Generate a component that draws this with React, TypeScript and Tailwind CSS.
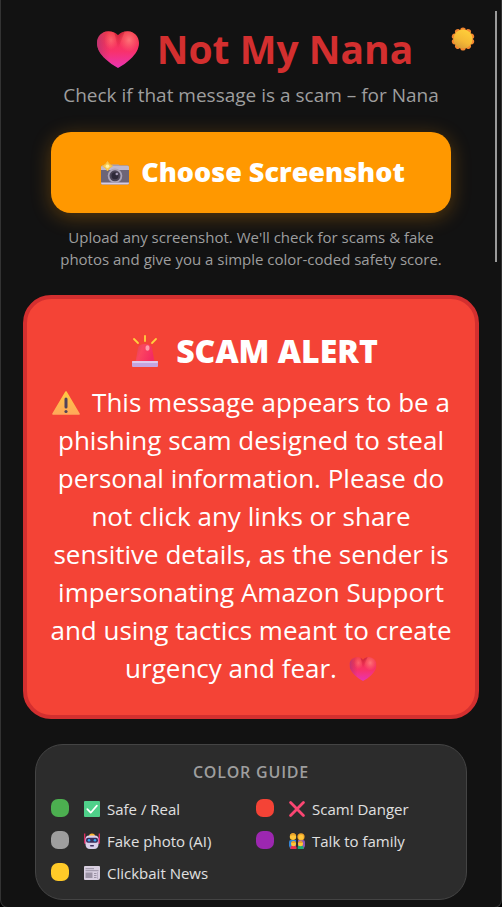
import { useId } from 'react'
import type { ReactNode } from 'react'

interface IconProps {
  className?: string
}

function HeartIcon({ className }: IconProps) {
  const id = useId()
  return (
    <svg viewBox="0 0 42 37" className={className} aria-hidden="true">
      <defs>
        <linearGradient id={`${id}-body`} x1="0" y1="0" x2="0" y2="1">
          <stop offset="0.1" stopColor="#f43a4c" />
          <stop offset="0.55" stopColor="#f8316b" />
          <stop offset="1" stopColor="#e934b4" />
        </linearGradient>
        <radialGradient id={`${id}-shine`} cx="0.5" cy="0.5" r="0.5">
          <stop offset="0" stopColor="#ff7a7c" stopOpacity="0.9" />
          <stop offset="1" stopColor="#ff6a70" stopOpacity="0" />
        </radialGradient>
        <linearGradient id={`${id}-edge`} x1="0" y1="0" x2="1" y2="0">
          <stop offset="0" stopColor="#a8327e" stopOpacity="0.7" />
          <stop offset="0.3" stopColor="#c02f62" stopOpacity="0" />
        </linearGradient>
        <linearGradient id={`${id}-fold`} x1="0" y1="0" x2="0" y2="1">
          <stop offset="0" stopColor="#b5122e" stopOpacity="0.7" />
          <stop offset="1" stopColor="#d81b45" stopOpacity="0" />
        </linearGradient>
        <clipPath id={`${id}-clip`}>
          <path d="M21 4.2C23.8 1.3 27.4 0 31 0.2C37.2 0.6 42 5.3 42 12C42 18 38.6 23.2 33.5 28C29.8 31.5 25.5 34.5 21 37C16.5 34.5 12.2 31.5 8.5 28C3.4 23.2 0 18 0 12C0 5.3 4.8 0.6 11 0.2C14.6 0 18.2 1.3 21 4.2Z" />
        </clipPath>
      </defs>
      <g clipPath={`url(#${id}-clip)`}>
        <rect width="42" height="37" fill={`url(#${id}-body)`} />
        <rect width="42" height="37" fill={`url(#${id}-edge)`} />
        <path d="M17 0H28L21 18Z" fill={`url(#${id}-fold)`} />
        <ellipse cx="32" cy="9" rx="10" ry="12" fill={`url(#${id}-shine)`} />
        <ellipse cx="14" cy="9" rx="7" ry="10" fill={`url(#${id}-shine)`} opacity="0.7" />
      </g>
    </svg>
  )
}

function SunIcon({ className }: IconProps) {
  const id = useId()
  const petals = [0, 36, 72, 108, 144, 180, 216, 252, 288, 324]
  return (
    <svg viewBox="0 0 24 24" className={className} aria-hidden="true">
      <defs>
        <linearGradient id={id} x1="0.8" y1="0" x2="0.3" y2="1">
          <stop offset="0" stopColor="#ffd13b" />
          <stop offset="0.6" stopColor="#f5b935" />
          <stop offset="1" stopColor="#d99b36" />
        </linearGradient>
      </defs>
      {petals.map((angle) => (
        <circle key={angle} cx="12" cy="3.2" r="2.8" fill="#f4862f" transform={`rotate(${angle} 12 12)`} />
      ))}
      <circle cx="12" cy="12" r="9.6" fill={`url(#${id})`} />
    </svg>
  )
}

function CameraIcon({ className }: IconProps) {
  return (
    <svg viewBox="0 0 28 24" className={className} aria-hidden="true">
      <path d="M9 5L10.5 3.5H17.5L19 5Z" fill="#a9a2b8" />
      <rect y="4.5" width="28" height="19" rx="1.5" fill="#6d6577" />
      <path d="M0 6A1.5 1.5 0 0 1 1.5 4.5H26.5A1.5 1.5 0 0 1 28 6V9H0Z" fill="#bfb8cd" />
      <path d="M0 21.5H28V22A1.5 1.5 0 0 1 26.5 23.5H1.5A1.5 1.5 0 0 1 0 22Z" fill="#d5cce5" />
      <circle cx="14" cy="14.8" r="7.3" fill="#aca5b8" />
      <circle cx="14" cy="14.8" r="5.5" fill="#4c4557" />
      <circle cx="14" cy="14.8" r="3.5" fill="#2e2939" />
      <circle cx="15.8" cy="13" r="1.3" fill="#a69bb6" />
      <path d="M6.5 0.5Q8 4 11.5 5Q8 6.5 6.5 10Q5 6.5 1.5 5Q5 4 6.5 0.5Z" fill="#f9ce55" stroke="#f3bc4a" />
      <circle cx="6.5" cy="5.2" r="1.8" fill="#fff0a9" />
    </svg>
  )
}

function SirenIcon({ className }: IconProps) {
  const id = useId()
  return (
    <svg viewBox="0 0 26 32" className={className} aria-hidden="true">
      <defs>
        <linearGradient id={id} x1="0" y1="0" x2="1" y2="0.4">
          <stop offset="0" stopColor="#d9484e" />
          <stop offset="0.4" stopColor="#fb4560" />
          <stop offset="1" stopColor="#f42b62" />
        </linearGradient>
      </defs>
      <g stroke="#ffd23f" strokeWidth="1.8" strokeLinecap="round">
        <path d="M13 1V6" />
        <path d="M2 4L6 8" />
        <path d="M24 4L20 8" />
      </g>
      <path d="M6 13Q7 9 13 9T20 13L22.5 27H3.5Z" fill={`url(#${id})`} />
      <ellipse cx="15.5" cy="13" rx="2" ry="2.8" fill="#ff9caa" />
      <rect y="26" width="26" height="6" rx="1" fill="#c4a5e0" />
      <rect y="26" width="26" height="2" rx="1" fill="#ddc9ee" />
    </svg>
  )
}

function WarningIcon({ className }: IconProps) {
  const id = useId()
  return (
    <svg viewBox="0 0 28 24" className={className} aria-hidden="true">
      <defs>
        <linearGradient id={id} x1="0" y1="0" x2="0" y2="1">
          <stop offset="0" stopColor="#ffc842" />
          <stop offset="1" stopColor="#ffa95a" />
        </linearGradient>
      </defs>
      <path d="M14 1L27 23H1Z" fill={`url(#${id})`} stroke={`url(#${id})`} strokeWidth="1.6" strokeLinejoin="round" />
      <rect x="12.5" y="6.5" width="3" height="11" rx="1.5" fill="#52435a" />
      <circle cx="14" cy="20.5" r="1.6" fill="#52435a" />
    </svg>
  )
}

function CheckIcon() {
  return (
    <svg viewBox="0 0 16 16" className="size-4 shrink-0" aria-hidden="true">
      <rect width="16" height="16" rx="1" fill="#4fd08a" />
      <path d="M3.3 8.2L6.7 11.7L12.9 4.6" fill="none" stroke="#fff" strokeWidth="1.7" strokeLinecap="round" strokeLinejoin="round" />
    </svg>
  )
}

function CrossIcon() {
  return (
    <svg viewBox="0 0 16 16" className="size-4 shrink-0" aria-hidden="true">
      <path d="M1.6 1.6L14.4 14.4M14.4 1.6L1.6 14.4" stroke="#fb4672" strokeWidth="2.8" strokeLinecap="round" />
    </svg>
  )
}

function RobotIcon() {
  return (
    <svg viewBox="0 0 16 16" className="size-4 shrink-0" aria-hidden="true">
      <path d="M0.7 0.5V10M15.3 0.5V10" stroke="#e22c60" strokeWidth="1.3" />
      <path d="M0 5H2.5V11H1Q0 11 0 9ZM16 5H13.5V11H15Q16 11 16 9Z" fill="#cf2961" />
      <path d="M5 3Q5 0.5 8 0.5T11 3Z" fill="#ffb52e" />
      <path d="M1.5 6Q1.5 2.5 5 2.5H11Q14.5 2.5 14.5 6V11Q14.5 16 10 16H6Q1.5 16 1.5 11Z" fill="#d9cfea" />
      <rect x="2" y="4.8" width="12" height="5" rx="2" fill="#382d5c" />
      <circle cx="5" cy="7.2" r="1.3" fill="#35a8f2" />
      <circle cx="11" cy="7.2" r="1.3" fill="#35a8f2" />
      <rect x="6" y="12" width="4" height="1.4" rx="0.7" fill="#40305f" />
    </svg>
  )
}

function FamilyIcon() {
  return (
    <svg viewBox="0 0 16 16" className="size-4 shrink-0" aria-hidden="true">
      <path d="M0 13V9Q0 7 2 7H7V16H1.5Z" fill="#3483d4" />
      <path d="M16 13V9Q16 7 14 7H9V16H14.5Z" fill="#8f54b5" />
      <circle cx="4" cy="3.8" r="3.2" fill="#ffc639" />
      <path d="M1 3Q1.5 0 4 0T7 3Q4 1.5 1 3Z" fill="#e8a02a" />
      <circle cx="12" cy="3.8" r="3.6" fill="#f0a42a" />
      <circle cx="12" cy="4.3" r="2.5" fill="#ffc639" />
      <path d="M1.5 16V14Q1.5 12.5 4.2 12.5T7.5 14V16Z" fill="#e8304f" />
      <path d="M8.7 16V14Q8.7 12.5 11.6 12.5T14.5 14V16Z" fill="#1cab72" />
      <circle cx="4.5" cy="10.8" r="2.5" fill="#ffc639" />
      <circle cx="11.5" cy="10.8" r="2.5" fill="#ffc639" />
      <path d="M2 10Q2.5 8 4.5 8T7 10ZM9 10Q9.5 8 11.5 8T14 10Z" fill="#e8a02a" />
    </svg>
  )
}

function NewsIcon() {
  return (
    <svg viewBox="0 0 16 16" className="size-4 shrink-0" aria-hidden="true">
      <path d="M0 2Q0 1 1 1H15Q16 1 16 2V13Q16 15 14 15H1Q0 15 0 14Z" fill="#d8cfe0" />
      <path d="M1.5 3.7H10M1.5 5.7H14.5M10 8.5H12.5M10 10.5H12.5M10 12.5H12.5" stroke="#9b93a5" />
      <rect x="1.5" y="7.5" width="7" height="5.5" fill="#9b93a5" />
      <path d="M13.5 7V14" stroke="#b8aec4" />
    </svg>
  )
}

interface LegendItemProps {
  color: string
  icon: ReactNode
  label: string
}

function LegendItem({ color, icon, label }: LegendItemProps) {
  return (
    <li className="flex items-center h-[22px]">
      <span className={`size-[18px] rounded-[7px] shrink-0 mr-[15px] mb-0.5 ${color}`} />
      {icon}
      <span className="ml-[7px] text-[15px] leading-[22px] text-[#e0e0e0] whitespace-nowrap">{label}</span>
    </li>
  )
}

const legend: LegendItemProps[] = [
  { color: 'bg-[#4caf50]', icon: <CheckIcon />, label: 'Safe / Real' },
  { color: 'bg-[#f44336]', icon: <CrossIcon />, label: 'Scam! Danger' },
  { color: 'bg-[#9e9e9e]', icon: <RobotIcon />, label: 'Fake photo (AI)' },
  { color: 'bg-[#9c27b0]', icon: <FamilyIcon />, label: 'Talk to family' },
  { color: 'bg-[#ffca28]', icon: <NewsIcon />, label: 'Clickbait News' },
]

export default function App() {
  return (
    <div className="bg-black font-['Open_Sans','Noto_Sans',sans-serif]">
      <div className="relative min-h-screen bg-[#121212] border-x border-b border-[#333] rounded-b-lg px-[22px] pt-6 pb-[7px] text-center">
        {/* Scroll thumb */}
        <div className="absolute right-1 top-[11px] w-0.5 h-[251px] bg-[#9a9a9a]" />

        <button type="button" aria-label="Toggle theme" className="absolute right-[26px] top-[27px]">
          <SunIcon className="size-6" />
        </button>

        <header>
          <h1 className="flex items-center justify-center gap-[18px] pl-2 text-[39px] leading-[50px] font-bold text-[#d32f2f]">
            <HeartIcon className="w-[42px] h-[37px]" />
            Not My Nana
          </h1>
          <p className="mt-[7px] text-[19px] leading-7 text-[#9e9e9e]">Check if that message is a scam – for Nana</p>
        </header>

        <div className="px-7 mt-[23px]">
          <button
            type="button"
            className="flex items-center justify-center gap-3 w-full h-[81px] pl-1 rounded-[20px] bg-[#ff9800] text-[27px] font-extrabold text-white shadow-[0_4px_20px_rgba(255,152,0,0.3)]"
          >
            <CameraIcon className="w-7 h-6" />
            Choose Screenshot
          </button>
          <p className="mt-[13px] text-[15px] leading-[22px] text-[#9e9e9e]">
            Upload any screenshot. We'll check for scams &amp; fake photos and give you a simple color-coded safety score.
          </p>
        </div>

        <section className="mt-[25px] px-5 pt-7 pb-7 rounded-[28px] border-4 border-[#d32f2f] bg-[#f44336] text-white">
          <h2 className="flex items-center justify-center gap-[18px] pl-2 text-[32px] leading-12 font-extrabold">
            <SirenIcon className="w-[26px] h-8" />
            SCAM ALERT
          </h2>
          <p className="mt-2 text-[26px] leading-[38px]">
            <WarningIcon className="inline-block w-7 h-6 mr-3 align-[-3px]" />
            This message appears to be a phishing scam designed to steal personal information. Please do not click any
            links or share sensitive details, as the sender is impersonating Amazon Support and using tactics meant to
            create urgency and fear.
            <HeartIcon className="inline-block w-7 h-6 ml-3 align-[-3px]" />
          </p>
        </section>

        <section className="mx-3 mt-[25px] px-[15px] pt-[15px] pb-[15px] rounded-[28px] border border-[#444] bg-[#2c2c2c]">
          <h3 className="text-base leading-6 font-semibold tracking-wider text-[#9e9e9e]">COLOR GUIDE</h3>
          <ul className="mt-[14px] grid grid-cols-2 gap-[10px]">
            {legend.map((item) => (
              <LegendItem key={item.label} {...item} />
            ))}
          </ul>
        </section>
      </div>
    </div>
  )
}
